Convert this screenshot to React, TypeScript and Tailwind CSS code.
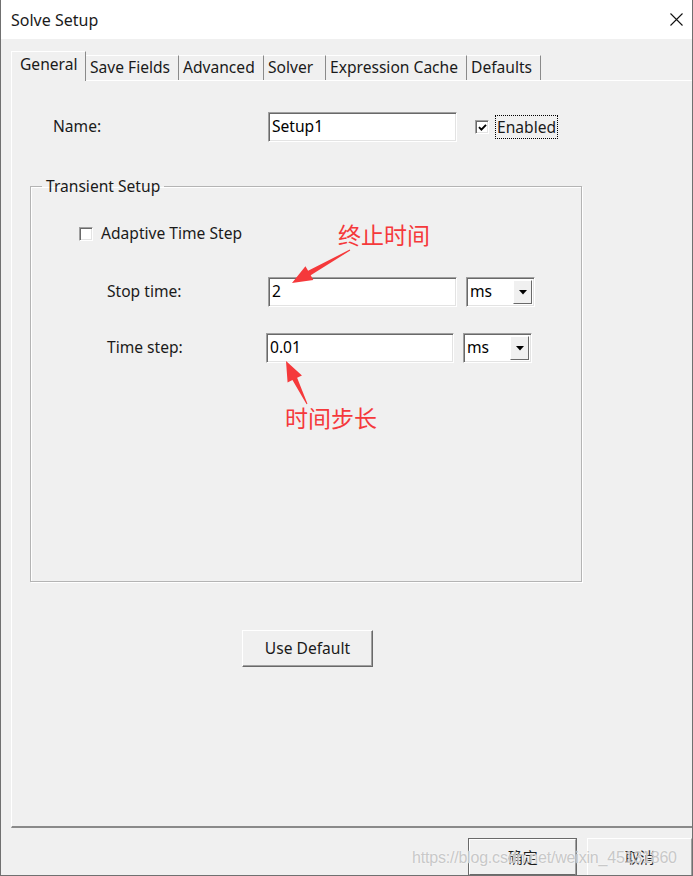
import React from "react";

const ui = { fontFamily: '"Noto Sans", "Noto Sans CJK SC", sans-serif' };

function arrowPoints(tx: number, ty: number, hx: number, hy: number) {
  const dx = hx - tx;
  const dy = hy - ty;
  const len = Math.sqrt(dx * dx + dy * dy);
  const ux = dx / len;
  const uy = dy / len;
  const px = -uy;
  const py = ux;
  const headLen = 20;
  const headW = 8;
  const shaftW = 2.6;
  const bx = hx - ux * headLen;
  const by = hy - uy * headLen;
  const pts = [
    [tx + px * 0.5, ty + py * 0.5],
    [bx + px * shaftW, by + py * shaftW],
    [bx + px * headW, by + py * headW],
    [hx, hy],
    [bx - px * headW, by - py * headW],
    [bx - px * shaftW, by - py * shaftW],
    [tx - px * 0.5, ty - py * 0.5],
  ];
  return pts.map((p) => p.join(",")).join(" ");
}

function Sunken({ className, children }: { className?: string; children?: React.ReactNode }) {
  return (
    <div
      className={
        "bg-white border border-t-[#a0a0a0] border-l-[#a0a0a0] border-b-white border-r-white shadow-[inset_1px_1px_0_#696969,inset_-1px_-1px_0_#e3e3e3] " +
        (className || "")
      }
    >
      {children}
    </div>
  );
}

function Checkbox({ checked }: { checked?: boolean }) {
  return (
    <div className="w-[14px] h-[14px] bg-white border border-t-[#a0a0a0] border-l-[#a0a0a0] border-b-white border-r-white shadow-[inset_1px_1px_0_#696969,inset_-1px_-1px_0_#e3e3e3] flex items-center justify-center">
      {checked && (
        <svg width="9" height="9" viewBox="0 0 9 9">
          <path d="M1 4.2 L3.4 6.6 L8 1.8" stroke="#000" strokeWidth="1.9" fill="none" />
        </svg>
      )}
    </div>
  );
}

function Combo({ value, className }: { value: string; className?: string }) {
  return (
    <Sunken className={"h-[30px] flex items-stretch " + (className || "")}>
      <div className="flex-1 flex items-center pl-[3px] text-[15.6px] text-black">{value}</div>
      <div className="w-[19px] my-[2px] mr-[2px] bg-[#f0f0f0] border border-t-white border-l-white border-b-[#696969] border-r-[#696969] flex items-center justify-center">
        <svg width="8" height="5" viewBox="0 0 8 5">
          <path d="M0 0 L8 0 L4 4.5 Z" fill="#000" />
        </svg>
      </div>
    </Sunken>
  );
}

export default function App() {
  const tabs = [
    { label: "Save Fields", w: 93 },
    { label: "Advanced", w: 85 },
    { label: "Solver", w: 62 },
    { label: "Expression Cache", w: 141 },
    { label: "Defaults", w: 74 },
  ];
  return (
    <div
      className="relative w-[693px] h-[876px] bg-[#f0f0f0] border-l border-r border-b border-l-[#707070] border-r-[#707070] border-b-[#707070] flex flex-col overflow-hidden text-[#1a1a1a]"
      style={ui}
    >
      {/* title bar */}
      <div className="h-[39px] bg-white flex items-center justify-between pl-[10px] pr-[9px] shrink-0">
        <span className="text-[16px]">Solve Setup</span>
        <svg width="13" height="13" viewBox="0 0 13 13">
          <path d="M0.5 0.5 L12.5 12.5 M12.5 0.5 L0.5 12.5" stroke="#111" strokeWidth="1.1" />
        </svg>
      </div>

      {/* tab strip */}
      <div className="h-[41px] pl-[10px] flex items-end shrink-0">
        <div className="relative z-10 h-[30px] -mb-px w-[75px] bg-[#f0f0f0] border-t border-l border-r border-t-white border-l-white border-r-[#8a8a8a] flex items-start pt-[1px] pl-[8px] text-[15.6px]">
          General
        </div>
        {tabs.map((t) => (
          <div
            key={t.label}
            style={{ width: t.w }}
            className="h-[25px] border-t border-r border-t-white border-r-[#8a8a8a] flex items-center pl-[4px] text-[15.6px] shrink-0 whitespace-nowrap"
          >
            {t.label}
          </div>
        ))}
      </div>

      {/* tab panel */}
      <div className="ml-[10px] h-[748px] border-t border-l border-b-2 border-t-white border-l-white border-b-[#8a8a8a] flex flex-col shrink-0">
        {/* Name row */}
        <div className="mt-[31px] h-[30px] flex items-center">
          <div className="pl-[41px] w-[256px] text-[15.6px]">Name:</div>
          <Sunken className="w-[189px] h-[30px] flex items-center pl-[3px] text-[15.6px] text-black">Setup1</Sunken>
          <div className="ml-[18px]">
            <Checkbox checked />
          </div>
          <div className="ml-[6px] px-[1px] border border-dotted border-black text-[15.6px] leading-[22px]">Enabled</div>
        </div>

        {/* group */}
        <fieldset className="mt-[34px] ml-[18px] w-[552px] h-[406px] border border-[#b4b4b4] shadow-[1px_1px_0_white,inset_1px_1px_0_white]">
          <legend className="ml-[11px] px-[4px] text-[15.6px] leading-[20px]">Transient Setup</legend>
          <div className="flex flex-col">
            <div className="mt-[28px] h-[20px] pl-[48px] flex items-center">
              <Checkbox />
              <span className="ml-[8px] text-[15.6px]">Adaptive Time Step</span>
            </div>
            <div className="mt-[33px] h-[30px] pl-[76px] flex items-center">
              <div className="w-[161px] text-[15.6px]">Stop time:</div>
              <Sunken className="w-[189px] h-[30px] flex items-center pl-[3px] text-[15.6px] text-black">2</Sunken>
              <Combo value="ms" className="ml-[9px] w-[69px]" />
            </div>
            <div className="mt-[26px] h-[30px] pl-[76px] flex items-center">
              <div className="w-[159px] text-[15.6px]">Time step:</div>
              <Sunken className="w-[188px] h-[30px] flex items-center pl-[3px] text-[15.6px] text-black">0.01</Sunken>
              <Combo value="ms" className="ml-[9px] w-[69px]" />
            </div>
          </div>
        </fieldset>

        <div className="mt-[48px] ml-[230px] w-[131px] h-[37px] border border-t-white border-l-white border-b-[#696969] border-r-[#696969] shadow-[inset_-1px_-1px_0_#a0a0a0] flex items-center justify-center text-[15.6px]">
          Use Default
        </div>
      </div>

      {/* footer buttons */}
      <div className="flex items-start pt-[10px] pl-[467px] gap-[10px] shrink-0">
        <div className="w-[110px] h-[38px] border border-[#6a6a6a] flex">
          <div className="flex-1 border border-t-white border-l-white border-b-[#696969] border-r-[#a0a0a0] flex items-center justify-center text-[15px]" style={{ fontFamily: '"Noto Sans CJK SC", sans-serif' }}>
            确定
          </div>
        </div>
        <div className="w-[105px] h-[38px] border border-t-white border-l-white border-b-[#696969] border-r-[#a0a0a0] flex items-center justify-center text-[15px]" style={{ fontFamily: '"Noto Sans CJK SC", sans-serif' }}>
          取消
        </div>
      </div>

      {/* annotations overlay */}
      <svg className="absolute left-[-1px] top-0 pointer-events-none" width="693" height="876">
        <polygon points={arrowPoints(350, 250, 292, 283)} fill="#f5393b" />
        <polygon points={arrowPoints(307, 404, 286, 361)} fill="#f5393b" />
      </svg>
      <div
        className="absolute left-[337px] top-[218px] text-[23px] leading-[32px] text-[#f5393b] pointer-events-none"
        style={{ fontFamily: '"Noto Sans CJK SC", sans-serif' }}
      >
        终止时间
      </div>
      <div
        className="absolute left-[284px] top-[401px] text-[23px] leading-[32px] text-[#f5393b] pointer-events-none"
        style={{ fontFamily: '"Noto Sans CJK SC", sans-serif' }}
      >
        时间步长
      </div>
      <div
        className="absolute left-[411px] top-[847px] text-[16px] leading-[22px] tracking-[-0.2px] text-[#c8c8c8] pointer-events-none whitespace-nowrap [text-shadow:0_0_2px_#fff]"
        style={{ fontFamily: '"Liberation Sans", Arial, sans-serif' }}
      >
        https://blog.csdn.net/weixin_45131860
      </div>
    </div>
  );
}
